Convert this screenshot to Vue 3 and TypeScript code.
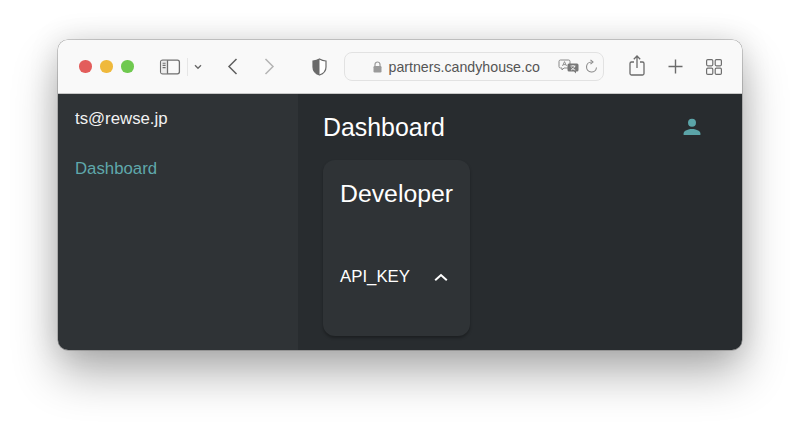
<script setup lang="ts">
const title = 'Dashboard'
</script>

<template>
  <div class="stage">
    <div class="window">
      <header class="toolbar">
        <div class="lights">
          <span class="light red"></span>
          <span class="light yellow"></span>
          <span class="light green"></span>
        </div>
        <svg class="ic sidebar-ic" width="22" height="16" viewBox="0 0 22 16" fill="none">
          <rect x="1.600" y="1.200" width="18.800" height="13.600" rx="2" stroke="#6f6f6f" stroke-width="1.300" />
          <rect x="2.200" y="1.800" width="6" height="12.400" fill="#ececec" />
          <path d="M8.500 1.200v13.600" stroke="#6f6f6f" stroke-width="1.300" />
          <path d="M3.600 4.200h3M3.600 6.400h3M3.600 8.600h3" stroke="#6f6f6f" stroke-width="1.100" />
        </svg>
        <span class="divider"></span>
        <svg class="ic chev" width="8" height="6" viewBox="0 0 8 6" fill="none">
          <path d="M1 1.200 4 4.200 7 1.200" stroke="#6b6b6b" stroke-width="1.400" />
        </svg>
        <svg class="ic back" width="11" height="17" viewBox="0 0 11 17" fill="none">
          <path d="M9.500 1 2 8.500 9.500 16" stroke="#5f5f5f" stroke-width="1.500" />
        </svg>
        <svg class="ic forward" width="11" height="17" viewBox="0 0 11 17" fill="none">
          <path d="M1.500 1 9 8.500 1.500 16" stroke="#b4b4b4" stroke-width="1.500" />
        </svg>
        <svg class="ic shield" width="15" height="18" viewBox="0 0 15 18" fill="none">
          <path d="M7.500 1C5.500 2.200 3.500 2.800 1 3v6c0 4 3 6.800 6.500 8 3.500-1.200 6.500-4 6.500-8V3c-2.500-.2-4.500-.8-6.500-2Z" fill="#fff" stroke="#6a6a6a" stroke-width="1.200" />
          <path d="M7.500 1C5.500 2.200 3.500 2.800 1 3v6c0 4 3 6.800 6.500 8Z" fill="#6a6a6a" />
        </svg>
        <div class="address">
          <svg class="lock" width="9" height="12" viewBox="0 0 9 12" fill="none">
            <path d="M2 5.500V3.500a2.500 2.500 0 0 1 5 0v2" stroke="#9a9a9a" stroke-width="1.200" />
            <rect x="0.500" y="5" width="8" height="6.500" rx="1.200" fill="#9a9a9a" />
          </svg>
          <span class="url">partners.candyhouse.co</span>
          <svg class="translate" width="21" height="15" viewBox="0 0 21 15" fill="none">
            <path d="M2.500 1h8a1.500 1.500 0 0 1 1.500 1.500v5A1.500 1.500 0 0 1 10.500 9H6l-2 2V9H2.500A1.500 1.500 0 0 1 1 7.500v-5A1.500 1.500 0 0 1 2.500 1Z" fill="#f7f7f7" stroke="#8a8a8a" stroke-width="1" />
            <path d="M4.500 7 6.500 2.600 8.500 7M5.200 5.600h2.600" stroke="#8a8a8a" stroke-width=".9" />
            <path d="M11 4.500h8a1.500 1.500 0 0 1 1.500 1.500v5a1.500 1.500 0 0 1-1.500 1.500h-1V14.500l-2-2h-5A1.500 1.500 0 0 1 9.500 11V6A1.500 1.500 0 0 1 11 4.500Z" fill="#777" />
            <path d="M12.500 7h5M15 6v1M13 11c2-.8 3.200-2 3.700-4M13.500 8.500c.8 1.200 2 2 3.800 2.500" stroke="#f4f4f4" stroke-width=".9" />
          </svg>
          <svg class="reload" width="13" height="15" viewBox="0 0 13 15" fill="none">
            <path d="M6.500 3A5 5 0 1 0 11.500 8.500" stroke="#8a8a8a" stroke-width="1.100" />
            <path d="M5.500.8 8 3 5.500 5.200" stroke="#8a8a8a" stroke-width="1.100" />
          </svg>
        </div>
        <svg class="ic share" width="16" height="21" viewBox="0 0 16 21" fill="none">
          <path d="M5 7H2.500A1.500 1.500 0 0 0 1 8.500v10A1.500 1.500 0 0 0 2.500 20h11a1.500 1.500 0 0 0 1.500-1.500v-10A1.500 1.500 0 0 0 13.500 7H11" stroke="#6b6b6b" stroke-width="1.300" />
          <path d="M8 13V1.200M4.800 4.200 8 1l3.200 3.200" stroke="#6b6b6b" stroke-width="1.300" />
        </svg>
        <svg class="ic plus" width="15" height="15" viewBox="0 0 15 15" fill="none">
          <path d="M7.500.5v14M.5 7.500h14" stroke="#6b6b6b" stroke-width="1.400" />
        </svg>
        <svg class="ic tabs" width="16" height="16" viewBox="0 0 16 16" fill="none" stroke="#6f6f6f" stroke-width="1.200">
          <rect x=".6" y=".6" width="6.200" height="6.200" rx="1.200" />
          <rect x="9.200" y=".6" width="6.200" height="6.200" rx="1.200" />
          <rect x=".6" y="9.200" width="6.200" height="6.200" rx="1.200" />
          <rect x="9.200" y="9.200" width="6.200" height="6.200" rx="1.200" />
        </svg>
      </header>

      <div class="body">
        <aside class="side">
          <div class="email">ts@rewse.jp</div>
          <a class="nav">{{ title }}</a>
        </aside>
        <main class="main">
          <div class="top">
            <h1 class="title">{{ title }}</h1>
            <svg class="user" width="18" height="18" viewBox="0 0 18 18" fill="#5ba4a8">
              <circle cx="9" cy="4.700" r="4" />
              <path d="M.600 17v-1.500C.600 12.500 5.500 11 9 11s8.400 1.500 8.400 4.500V17Z" />
            </svg>
          </div>
          <section class="card">
            <h2 class="card-title">Developer</h2>
            <div class="row">
              <span class="key">API_KEY</span>
              <svg class="caret" width="14" height="9" viewBox="0 0 14 9" fill="none">
                <path d="M1.200 7.300 7 2 12.800 7.300" stroke="#fff" stroke-width="2" />
              </svg>
            </div>
          </section>
        </main>
      </div>
    </div>
  </div>
</template>

<style>
html, body { margin: 0; background: #fff; overflow: hidden; }
</style>

<style scoped>
.stage {
  width: 800px;
  height: 427px;
  box-sizing: border-box;
  padding: 40px 58px 0;
  overflow: hidden;
  font-family: "Liberation Sans", Arial, sans-serif;
}
.window {
  width: 684px;
  height: 310px;
  border-radius: 10px;
  overflow: hidden;
  display: flex;
  flex-direction: column;
  box-shadow: 0 0 0 0.5px rgba(0, 0, 0, 0.35), 0 24px 46px rgba(0, 0, 0, 0.3), 0 0 30px rgba(0, 0, 0, 0.13);
}
.toolbar {
  height: 54px;
  flex: none;
  box-sizing: border-box;
  background: #f9f9f9;
  border-bottom: 1px solid #c8c8c8;
  display: flex;
  align-items: center;
  padding-left: 21px;
}
.lights { display: flex; gap: 8.500px; }
.light { width: 12.500px; height: 12.500px; border-radius: 50%; }
.red { background: #e35d5b; }
.yellow { background: #efb93c; }
.green { background: #6fc94f; }
.ic { flex: none; }
.sidebar-ic { margin-left: 25.500px; }
.divider { width: 1px; height: 18px; background: #e6e6e6; margin-left: 6px; }
.chev { margin-left: 6px; }
.back { margin-left: 25px; }
.forward { margin-left: 26px; }
.shield { margin-left: 37px; }
.address {
  width: 260px;
  height: 29px;
  margin-left: 17px;
  box-sizing: border-box;
  border: 1px solid #e2e2e2;
  border-radius: 8px;
  background: #f8f8f8;
  display: flex;
  align-items: center;
  padding-left: 27.500px;
  flex: none;
}
.lock { flex: none; }
.url { margin-left: 7px; font-size: 14.200px; color: #555; white-space: nowrap; width: 154px; }
.translate { margin-left: 15px; flex: none; }
.reload { margin-left: 6px; flex: none; }
.share { margin-left: 25px; margin-top: -3px; }
.plus { margin-left: 23px; }
.tabs { margin-left: 23px; }
.body { flex: 1; display: flex; min-height: 0; }
.side {
  width: 240px;
  flex: none;
  background: #2f3336;
  box-sizing: border-box;
  padding: 15px 17px;
}
.email { color: #f2f2f2; font-size: 16.800px; line-height: 20px; }
.nav { display: block; margin-top: 30px; color: #5fa8ab; font-size: 16.800px; line-height: 20px; }
.main {
  flex: 1;
  background: #282c2f;
  box-sizing: border-box;
  padding: 0 41px 0 25px;
}
.top {
  height: 66px;
  display: flex;
  align-items: center;
  justify-content: space-between;
}
.title { margin: 0; color: #fff; font-size: 24.900px; font-weight: 400; }
.user { margin-top: -1px; }
.card {
  width: 147px;
  height: 176px;
  background: #2f3336;
  border-radius: 12px;
  box-sizing: border-box;
  padding: 20px 17px 0;
  box-shadow: 0 2px 3px rgba(0, 0, 0, 0.3);
}
.card-title { margin: 0; color: #fff; font-size: 24.800px; font-weight: 400; line-height: 28px; }
.row {
  margin-top: 59px;
  display: flex;
  align-items: center;
  justify-content: space-between;
  height: 20px;
  padding-right: 5px;
}
.key { color: #fff; font-size: 16.800px; }
</style>
